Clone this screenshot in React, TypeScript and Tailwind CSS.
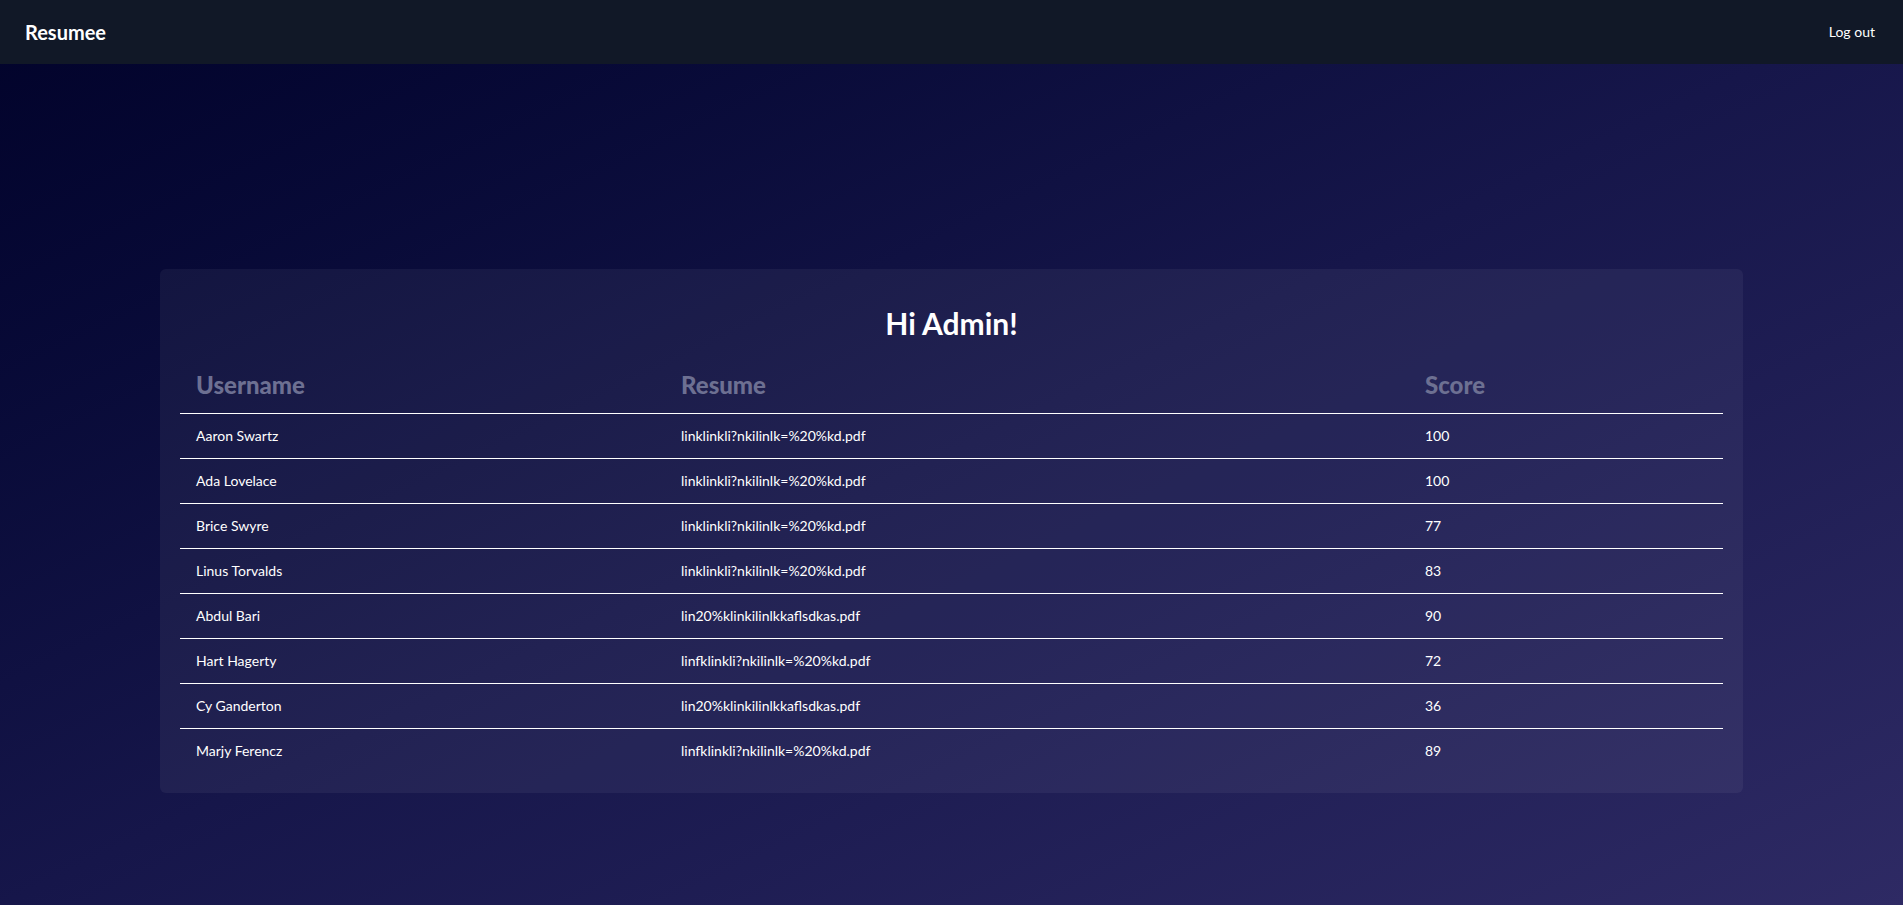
import React from "react";

const rows = [
  ["Aaron Swartz", "linklinkli?nkilinlk=%20%kd.pdf", "100"],
  ["Ada Lovelace", "linklinkli?nkilinlk=%20%kd.pdf", "100"],
  ["Brice Swyre", "linklinkli?nkilinlk=%20%kd.pdf", "77"],
  ["Linus Torvalds", "linklinkli?nkilinlk=%20%kd.pdf", "83"],
  ["Abdul Bari", "lin20%klinkilinlkkaflsdkas.pdf", "90"],
  ["Hart Hagerty", "linfklinkli?nkilinlk=%20%kd.pdf", "72"],
  ["Cy Ganderton", "lin20%klinkilinlkkaflsdkas.pdf", "36"],
  ["Marjy Ferencz", "linfklinkli?nkilinlk=%20%kd.pdf", "89"],
];

export default function App() {
  return (
    <div
      className="min-h-screen w-full bg-gradient-to-br from-[#02032a] via-[#16164a] to-[#2e2a64] text-white"
      style={{ fontFamily: '"Segoe UI", Lato, "Noto Sans", sans-serif' }}
    >
      <nav className="flex h-16 items-center justify-between bg-[#111827] pl-[25px] pr-[28px]">
        <span className="text-xl font-bold leading-7 text-white">Resumee</span>
        <button className="text-sm leading-5 text-white">Log out</button>
      </nav>
      <main className="px-[160px] pt-[205px] pb-[113px]">
        <div className="rounded-md bg-white/5 p-5">
          <h1 className="mt-4 mb-6 text-center text-3xl font-bold leading-9">Hi Admin!</h1>
          <div className="w-full">
            <div className="flex border-b border-white text-2xl font-black leading-8 text-[#6d7092]">
              <div className="w-[485px] px-4 pt-1 pb-3">Username</div>
              <div className="w-[744px] px-4 pt-1 pb-3">Resume</div>
              <div className="flex-1 px-4 pt-1 pb-3">Score</div>
            </div>
            {rows.map((r, i) => (
              <div
                key={i}
                className={`flex text-sm leading-5 text-white ${i < rows.length - 1 ? "border-b border-white" : ""}`}
              >
                <div className="w-[485px] px-4 py-3">{r[0]}</div>
                <div className="w-[744px] px-4 py-3">{r[1]}</div>
                <div className="flex-1 px-4 py-3">{r[2]}</div>
              </div>
            ))}
          </div>
        </div>
      </main>
    </div>
  );
}
